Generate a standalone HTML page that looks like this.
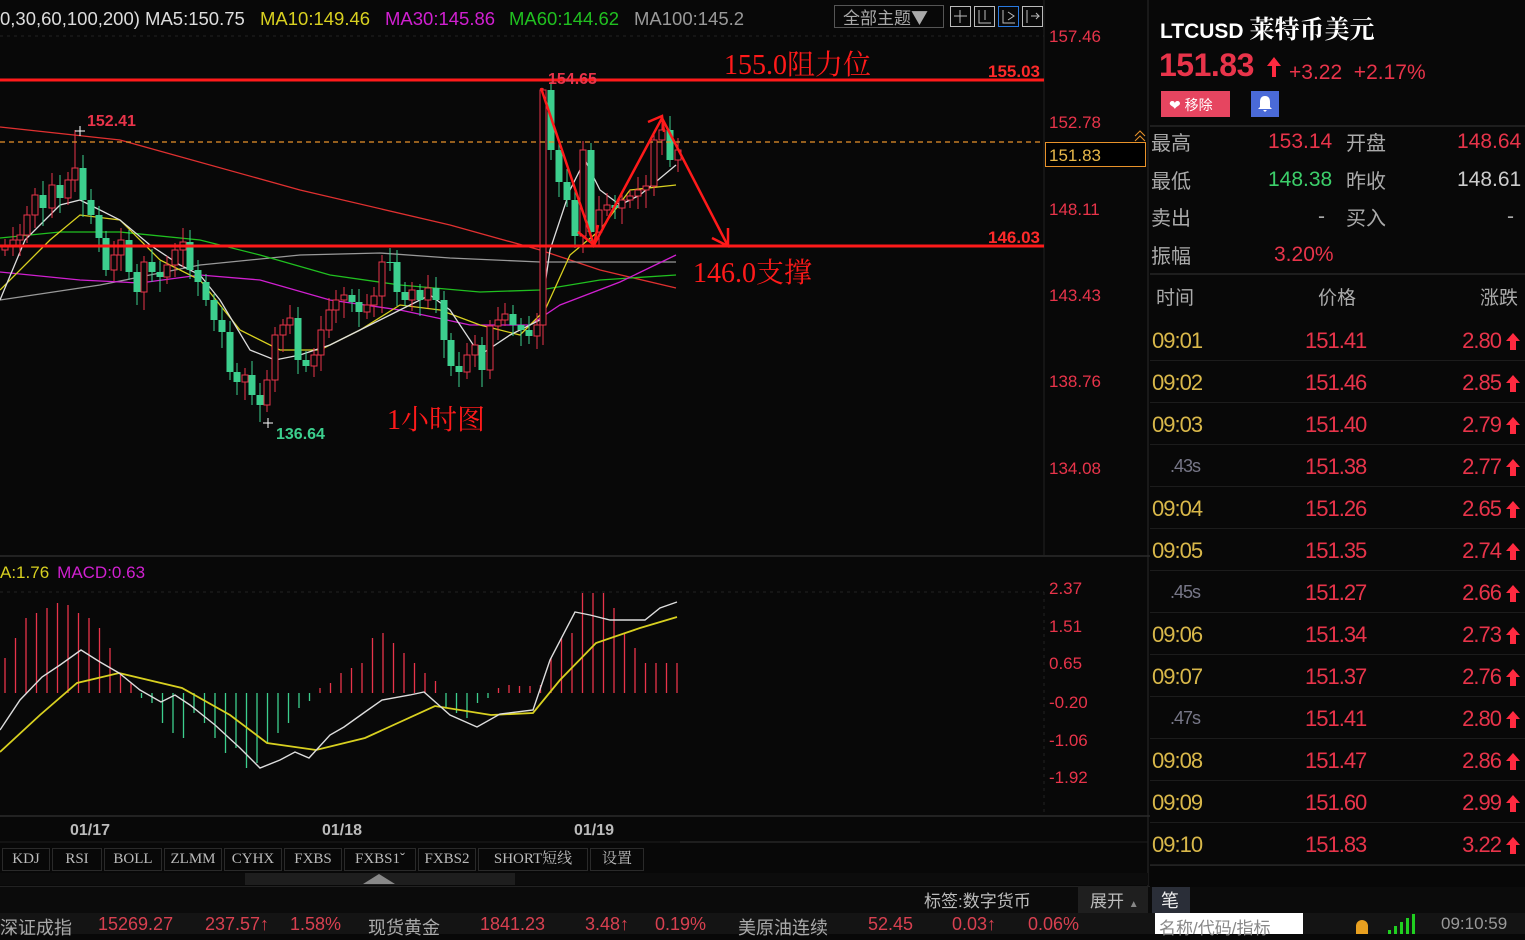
<!DOCTYPE html>
<html><head><meta charset="utf-8">
<style>
*{margin:0;padding:0;box-sizing:border-box}
body{width:1525px;height:934px;background:#080808;overflow:hidden;font-family:"Liberation Sans","Noto Sans CJK SC",sans-serif;position:relative;color:#ccc}
.a{position:absolute;white-space:nowrap}
.r{color:#e8344a}
.row{position:absolute;left:1150px;width:375px;height:42px;border-bottom:1px solid #1c1c1c;font-size:22px;letter-spacing:-1px}
.row .t{position:absolute;left:2px;top:9px;color:#d9b84a}
.row .s{position:absolute;left:20px;top:11px;color:#778;font-size:18px}
.row .p{position:absolute;left:155px;top:9px;color:#e8344a}
.row .c{position:absolute;right:24px;top:9px;color:#e8344a}
.row .ar{position:absolute;right:4px;top:13px;width:16px;height:18px}
.tab{position:absolute;top:848px;height:23px;border:1px solid #2a2a2a;color:#bbb;font-family:"Liberation Serif","Noto Serif CJK SC",serif;font-size:15px;text-align:center;line-height:21px}
.lab{font-size:20px;color:#aaa}
.tk{position:absolute;top:914px;font-size:18px;color:#d84050}
.tk.g{color:#aaa}
</style></head><body>
<svg id="ch" class="a" style="left:0;top:0" width="1150" height="934">
<line x1="0" y1="36" x2="1044" y2="36" stroke="#222" stroke-dasharray="3 4"/>
<line x1="1044" y1="0" x2="1044" y2="556" stroke="#222"/>
<line x1="0" y1="556" x2="1150" y2="556" stroke="#222" stroke-width="2"/>
<line x1="0" y1="592" x2="1044" y2="592" stroke="#222" stroke-dasharray="3 4"/>
<line x1="1044" y1="592" x2="1044" y2="815" stroke="#222" stroke-dasharray="3 4"/>
<line x1="0" y1="816" x2="1150" y2="816" stroke="#222" stroke-width="2"/>
<line x1="1148" y1="0" x2="1148" y2="886" stroke="#2a2a2a"/>
<g id="ma" fill="none" stroke-width="1.3"></g>
<g id="cd"></g>
<line x1="0" y1="142" x2="1044" y2="142" stroke="#e8922a" stroke-dasharray="5 4" stroke-width="1.3"/>
<line x1="0" y1="80" x2="1044" y2="80" stroke="#ff1a1a" stroke-width="3"/>
<line x1="0" y1="246" x2="1044" y2="246" stroke="#ff1a1a" stroke-width="3"/>
<polyline points="541,88 594,245 662,118 728,246" fill="none" stroke="#ff1a1a" stroke-width="2.5"/>
<polyline points="578,232 594,245 598,225" fill="none" stroke="#ff1a1a" stroke-width="2.5"/>
<polyline points="648,122 662,116 664,132" fill="none" stroke="#ff1a1a" stroke-width="2.5"/>
<polyline points="712,238 728,246 728,228" fill="none" stroke="#ff1a1a" stroke-width="2.5"/>
<text x="548" y="84" fill="#e8344a" font-size="16" font-weight="bold" font-family="Liberation Sans">154.65</text>
<text x="87" y="126" fill="#e8344a" font-size="16" font-weight="bold" font-family="Liberation Sans">152.41</text>
<text x="276" y="439" fill="#3ccf8e" font-size="16" font-weight="bold" font-family="Liberation Sans">136.64</text>
<path d="M75,131h10M80,126v10M263,423h10M268,418v10" stroke="#fff"/>
<text x="724" y="74" fill="#ff1a1a" font-size="28" font-family="Liberation Serif,Noto Serif CJK SC,serif">155.0阻力位</text>
<text x="693" y="282" fill="#ff1a1a" font-size="28" font-family="Liberation Serif,Noto Serif CJK SC,serif">146.0支撑</text>
<text x="387" y="429" fill="#ff1a1a" font-size="28" font-family="Liberation Serif,Noto Serif CJK SC,serif">1小时图</text>
<text x="988" y="77" fill="#ff2a2a" font-size="17" font-weight="bold" font-family="Liberation Sans">155.03</text>
<text x="988" y="243" fill="#ff2a2a" font-size="17" font-weight="bold" font-family="Liberation Sans">146.03</text>
<g fill="#e8344a" font-size="17" font-family="Liberation Sans">
<text x="1049" y="42">157.46</text><text x="1049" y="128">152.78</text><text x="1049" y="215">148.11</text>
<text x="1049" y="301">143.43</text><text x="1049" y="387">138.76</text><text x="1049" y="474">134.08</text>
<text x="1049" y="594">2.37</text><text x="1049" y="632">1.51</text><text x="1049" y="669">0.65</text>
<text x="1049" y="708">-0.20</text><text x="1049" y="746">-1.06</text><text x="1049" y="783">-1.92</text>
</g>
<rect x="1045.5" y="142.5" width="100" height="24" fill="#000" stroke="#e8922a"/>
<text x="1049" y="161" fill="#e8b84a" font-size="17" font-family="Liberation Sans">151.83</text>
<path d="M1135,136l5,-5l5,5M1135,141l5,-5l5,5" stroke="#e8922a" fill="none"/>
<text x="0" y="25" font-size="18.5" font-family="Liberation Sans"><tspan fill="#ddd">0,30,60,100,200) MA5:150.75</tspan><tspan fill="#d8d020" x="260">MA10:149.46</tspan><tspan fill="#d020d0" x="385">MA30:145.86</tspan><tspan fill="#20c020" x="509">MA60:144.62</tspan><tspan fill="#999" x="634">MA100:145.2</tspan></text>
<rect x="834.5" y="5.5" width="109" height="22" fill="none" stroke="#555"/>
<text x="843" y="24" fill="#aaa" font-size="17" font-family="Noto Sans CJK SC,sans-serif">全部主题▼</text>
<g fill="none" stroke="#bbb"><rect x="950.5" y="6.5" width="20" height="20"/><rect x="974.5" y="6.5" width="20" height="20"/><rect x="998.5" y="6.5" width="20" height="20" stroke="#2a7ae0"/><rect x="1022.5" y="6.5" width="20" height="20"/>
<path d="M960,10v13M954,16h13M979,10v13h12M985,10v10M1003,10v13h12M1008,12l6,4l-6,4M1027,10v13M1031,16h8l-3,-3M1036,19l3,-3"/></g>
<text x="0" y="578" font-size="17" font-family="Liberation Sans"><tspan fill="#d8d020">A:1.76</tspan><tspan fill="#d020d0" dx="8">MACD:0.63</tspan></text>
<g id="hist"></g>
<polyline fill="none" stroke="#d8d020" stroke-width="1.8" points="0,752 40,715 77,683 119,673 182,688 230,715 267,743 316,750 365,738 435,706 491,715 533,713 560,680 596,643 640,628 677,617"/>
<polyline fill="none" stroke="#ddd" stroke-width="1.4" points="0,730 20,700 42,677 60,665 81,650 100,662 119,673 140,690 161,702 175,695 190,705 215,725 240,748 260,768 280,760 295,752 309,758 330,735 344,727 365,712 382,700 410,695 424,692 450,715 477,727 500,714 533,710 550,660 575,612 590,615 610,620 645,620 660,608 677,602"/>
<g fill="#bbb" font-size="16" font-weight="bold" font-family="Liberation Sans"><text x="70" y="835">01/17</text><text x="322" y="835">01/18</text><text x="574" y="835">01/19</text></g>
<line x1="0" y1="842" x2="1148" y2="842" stroke="#1e1e1e"/>
<line x1="680" y1="842" x2="920" y2="842" stroke="#333"/>
</svg>

<div class="tab" style="left:2px;width:48px">KDJ</div>
<div class="tab" style="left:52px;width:50px">RSI</div>
<div class="tab" style="left:104px;width:58px">BOLL</div>
<div class="tab" style="left:164px;width:58px">ZLMM</div>
<div class="tab" style="left:224px;width:58px">CYHX</div>
<div class="tab" style="left:284px;width:58px">FXBS</div>
<div class="tab" style="left:344px;width:72px">FXBS1ˇ</div>
<div class="tab" style="left:418px;width:58px">FXBS2</div>
<div class="tab" style="left:478px;width:110px">SHORT短线</div>
<div class="tab" style="left:590px;width:54px">设置</div>
<div class="a" style="left:0;top:873px;width:1148px;height:12px;background:#0c0c0c"></div>
<div class="a" style="left:245px;top:873px;width:270px;height:12px;background:#1e1e1e"></div>
<div class="a" style="left:363px;top:874px;width:0;height:0;border-left:16px solid transparent;border-right:16px solid transparent;border-bottom:10px solid #888"></div>
<div class="a" style="left:0;top:886px;width:1525px;height:27px;background:#0b0b0b;border-top:1px solid #222"></div>
<div class="a" style="left:924px;top:887px;font-size:17px;color:#bbb">标签:数字货币</div>
<div class="a" style="left:1078px;top:886px;width:70px;height:27px;background:#1f1f1f;font-size:17px;color:#bbb;padding:1px 0 0 12px">展开 <span style="font-size:10px;color:#888">▲</span></div>
<div class="a" style="left:1152px;top:887px;width:38px;height:26px;background:#2a2e38;font-size:18px;color:#eee;padding:0 0 0 9px">笔</div>
<div class="a" style="left:0;top:913px;width:1525px;height:21px;background:#141414"></div>
<div class="tk g" style="left:0">深证成指</div>
<div class="tk" style="left:98px">15269.27</div>
<div class="tk" style="left:205px">237.57↑</div>
<div class="tk" style="left:290px">1.58%</div>
<div class="tk g" style="left:368px">现货黄金</div>
<div class="tk" style="left:480px">1841.23</div>
<div class="tk" style="left:585px">3.48↑</div>
<div class="tk" style="left:655px">0.19%</div>
<div class="tk g" style="left:738px">美原油连续</div>
<div class="tk" style="left:868px">52.45</div>
<div class="tk" style="left:952px">0.03↑</div>
<div class="tk" style="left:1028px">0.06%</div>
<div class="a" style="left:1155px;top:913px;width:148px;height:21px;background:#fff;font-size:17px;color:#888;padding:1px 4px">名称/代码/指标</div>
<div class="a" style="left:1356px;top:920px;width:12px;height:14px;background:#e8a020;border-radius:6px 6px 0 0"></div>
<svg class="a" style="left:1388px;top:914px" width="30" height="20"><g fill="#20d020"><rect x="0" y="16" width="3" height="4"/><rect x="6" y="12" width="3" height="8"/><rect x="12" y="8" width="3" height="12"/><rect x="18" y="4" width="3" height="16"/><rect x="24" y="0" width="3" height="20"/></g></svg>
<div class="a" style="left:1441px;top:914px;font-size:17px;color:#999">09:10:59</div>

<div class="a" style="left:1160px;top:10px;font-size:21px;color:#fff;font-weight:bold">LTCUSD <span style="font-family:'Noto Serif CJK SC',serif;font-size:25px">莱特币美元</span></div>
<div class="a r" style="left:1159px;top:47px;font-size:32px;font-weight:bold;letter-spacing:-0.5px">151.83</div>
<svg class="a" style="left:1265px;top:56px" width="18" height="22"><path d="M9,1L2,10h5v11h4V10h5z" fill="#ff2a40"/></svg>
<div class="a r" style="left:1289px;top:61px;font-size:21px">+3.22&nbsp;&nbsp;+2.17%</div>
<div class="a" style="left:1161px;top:91px;width:69px;height:26px;background:#e64560;color:#fff;font-size:14px;padding:4px 0 0 8px">❤ 移除</div>
<div class="a" style="left:1251px;top:91px;width:28px;height:26px;background:#4a6ad8"></div>
<svg class="a" style="left:1256px;top:94px" width="18" height="20"><path d="M9,2c-4,0 -5,3 -5,6v5l-2,2h14l-2,-2v-5c0,-3 -1,-6 -5,-6zM7,16h4l-2,2z" fill="#fff"/></svg>
<div class="a" style="left:1150px;top:125px;width:375px;height:2px;background:#1e1e1e"></div>
<div class="a lab" style="left:1151px;top:127px">最高</div><div class="a r" style="left:1268px;top:130px;font-size:21px">153.14</div>
<div class="a lab" style="left:1346px;top:127px">开盘</div><div class="a r" style="left:1457px;top:130px;font-size:21px">148.64</div>
<div class="a lab" style="left:1151px;top:165px">最低</div><div class="a" style="left:1268px;top:168px;font-size:21px;color:#3ccf6a">148.38</div>
<div class="a lab" style="left:1346px;top:165px">昨收</div><div class="a" style="left:1457px;top:168px;font-size:21px;color:#ccc">148.61</div>
<div class="a lab" style="left:1151px;top:202px">卖出</div><div class="a" style="left:1318px;top:205px;font-size:21px;color:#aaa">-</div>
<div class="a lab" style="left:1346px;top:202px">买入</div><div class="a" style="left:1507px;top:205px;font-size:21px;color:#aaa">-</div>
<div class="a lab" style="left:1151px;top:240px">振幅</div><div class="a r" style="left:1274px;top:243px;font-size:21px">3.20%</div>
<div class="a" style="left:1150px;top:273px;width:375px;height:2px;background:#1e1e1e"></div>
<div class="a lab" style="left:1156px;top:283px;font-size:19px">时间</div>
<div class="a lab" style="left:1318px;top:283px;font-size:19px">价格</div>
<div class="a lab" style="left:1480px;top:283px;font-size:19px">涨跌</div>
<div id="rows"></div>
<div class="a" style="left:1150px;top:865px;width:375px;height:22px;background:#070707;border-top:1px solid #222"></div>

<script>
var NS="http://www.w3.org/2000/svg";
function el(p,t,a){var e=document.createElementNS(NS,t);for(var k in a)e.setAttribute(k,a[k]);p.appendChild(e);return e;}
var C=[[5,245],[13,240],[20,235],[27,215],[35,195],[43,208],[52,185],[60,198],[68,180],[75,168],[83,200],[91,215],[99,238],[106,270],[114,255],[121,240],[129,272],[137,292],[144,262],[152,272],[160,277],[167,265],[175,250],[183,242],[190,270],[198,282],[206,300],[214,320],[222,332],[230,372],[237,382],[245,375],[252,395],[260,405],[267,380],[275,335],[283,325],[290,318],[298,360],[306,366],[314,355],[321,330],[329,310],[336,300],[344,295],[352,302],[359,312],[367,305],[374,296],[382,262],[390,262],[397,292],[405,300],[412,290],[420,300],[428,288],[436,300],[444,340],[451,366],[459,372],[467,355],[475,345],[482,370],[490,326],[498,320],[505,314],[513,325],[521,330],[529,336],[537,325],[543,90],[551,150],[559,182],[567,200],[575,236],[583,150],[591,232],[599,210],[607,205],[615,208],[622,200],[630,196],[638,190],[646,186],[654,140],[662,130],[670,160],[678,150]];
var cd=document.getElementById('cd'),prev=250;
C.forEach(function(c,i){var o=prev,cl=c[1];if(i==70)o=325;var top=Math.min(o,cl),bot=Math.max(o,cl);var hi=top-6-(i*7%9),lo=bot+6+(i*5%13);
if(i==70){hi=88;lo=345}if(i==9)hi=130;if(i==33)lo=422;
var up=cl<o,col=up?'#e8344a':'#3ccf8e';
el(cd,'line',{x1:c[0],x2:c[0],y1:hi,y2:lo,stroke:col});
if(up)el(cd,'rect',{x:c[0]-3,y:top,width:6,height:Math.max(bot-top,1),fill:'#080808',stroke:col});
else el(cd,'rect',{x:c[0]-3.5,y:top,width:7,height:Math.max(bot-top,1),fill:col});
prev=cl;});
var ma=document.getElementById('ma');
var L=[['#e03030',"0,127 120,140 300,190 450,225 540,250 600,270 676,288"],
['#999',"0,300 100,285 200,265 300,255 380,253 450,258 540,262 620,262 676,262"],
['#20c020',"0,238 60,232 120,232 200,240 260,255 330,275 400,285 480,292 540,290 600,280 676,275"],
['#d020d0',"0,272 80,280 140,283 200,275 260,280 330,300 400,310 470,325 530,325 560,305 620,282 676,255"],
['#d8d020',"0,290 50,240 80,215 120,220 160,260 200,280 240,330 280,350 320,350 360,330 400,305 440,310 480,325 520,335 545,310 570,255 600,230 630,190 676,185"],
['#ddd',"0,300 25,240 60,205 80,200 100,210 120,220 150,245 180,265 200,275 220,300 250,350 275,360 300,355 330,345 360,330 400,310 430,295 450,310 480,355 510,335 540,320 550,250 570,190 585,160 600,190 620,205 640,195 676,165"]];
L.forEach(function(l){el(ma,'polyline',{points:l[1],stroke:l[0]});});
var H=[-35,-55,-75,-80,-85,-90,-88,-80,-75,-65,-45,-20,-10,5,10,30,40,45,20,30,45,60,55,75,70,50,40,30,15,8,-5,-10,-20,-25,-30,-55,-60,-50,-40,-30,-20,-12,15,20,25,10,5,-5,-8,-7,-7,-8,-12,-30,-55,-70,-75,-60,-45,-28,-28,-28,-28,-28,-28];
var h=document.getElementById('hist');
H.forEach(function(v,i){var x=5+i*10.5;var z=693;
if(i>=52){v=[-35,-55,-60,-100,-100,-100,-85,-60,-45,-30,-30,-30,-30][i-52]||-28}
el(h,'line',{x1:x,x2:x,y1:z,y2:z+v,stroke:v<0?'#e8344a':'#3ccf8e','stroke-width':1.3});});
var R=[['09:01','151.41','2.80'],['09:02','151.46','2.85'],['09:03','151.40','2.79'],['.43s','151.38','2.77'],['09:04','151.26','2.65'],['09:05','151.35','2.74'],['.45s','151.27','2.66'],['09:06','151.34','2.73'],['09:07','151.37','2.76'],['.47s','151.41','2.80'],['09:08','151.47','2.86'],['09:09','151.60','2.99'],['09:10','151.83','3.22']];
var s='';R.forEach(function(r,i){var t=r[0][0]=='.'?'<span class="s">'+r[0]+'</span>':'<span class="t">'+r[0]+'</span>';
s+='<div class="row" style="top:'+(319+i*42)+'px">'+t+'<span class="p">'+r[1]+'</span><span class="c">'+r[2]+'</span><svg class="ar" viewBox="0 0 16 18"><path d="M8,1L1,9h4v9h6V9h4z" fill="#ff2a40"/></svg></div>';});
document.getElementById('rows').innerHTML=s;
</script>
</body></html>
